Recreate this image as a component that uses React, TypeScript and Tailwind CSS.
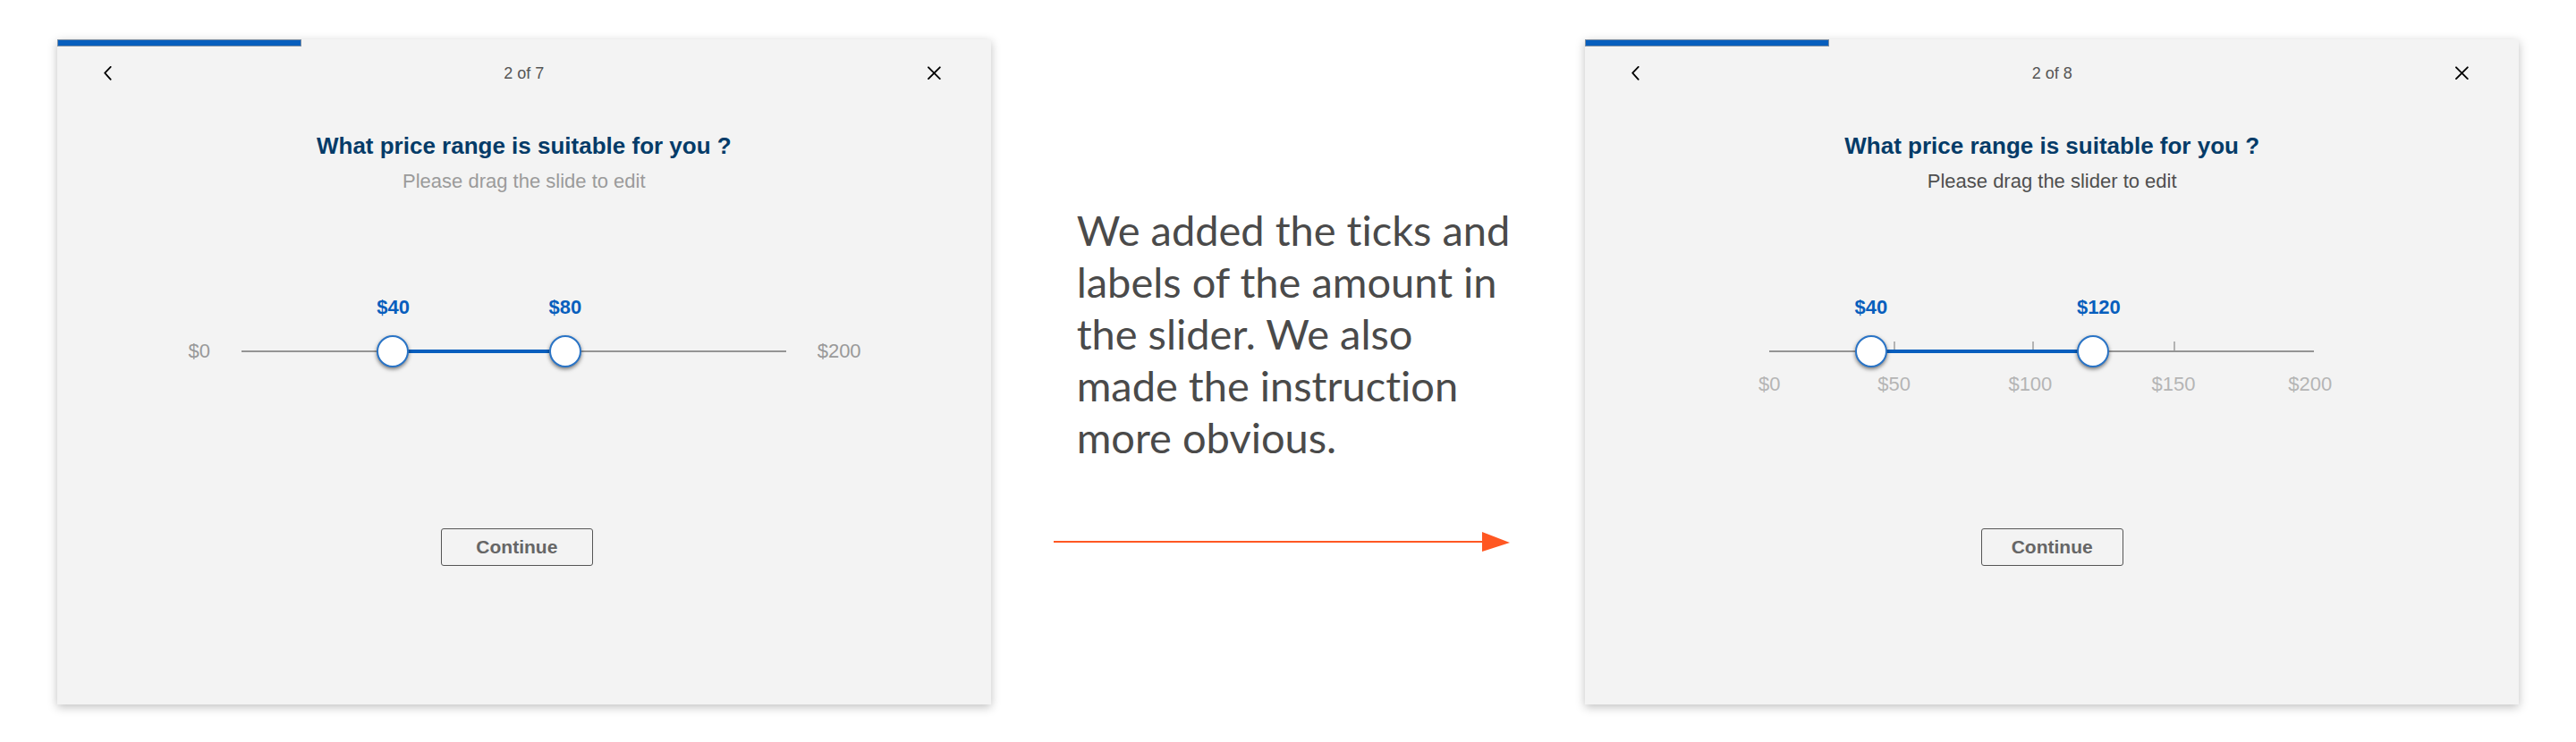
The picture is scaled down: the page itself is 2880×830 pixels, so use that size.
import { useState } from "react";

type Stop = { at: number; price: number };
type Tick = { at: number; labelAt: number; label: string };

type StepProps = {
  id: string;
  counter: string;
  hint: string;
  hintClass: string;
  stops: Stop[];
  initial: [number, number];
  ends?: [string, string];
  ticks?: Tick[];
  buttonClass: string;
};

const SCALE = 1000;

function priceAt(stops: Stop[], at: number) {
  for (let i = 1; i < stops.length; i++) {
    const a = stops[i - 1];
    const b = stops[i];
    if (at <= b.at) {
      return Math.round(a.price + ((at - a.at) / (b.at - a.at)) * (b.price - a.price));
    }
  }
  return stops[stops.length - 1].price;
}

const percent = (at: number) => `${(at / SCALE) * 100}%`;

const rangeClass =
  "pointer-events-none absolute inset-y-0 -left-[18px] h-9 w-[calc(100%+36px)] appearance-none bg-transparent outline-none " +
  "[&::-webkit-slider-thumb]:pointer-events-auto [&::-webkit-slider-thumb]:size-9 [&::-webkit-slider-thumb]:cursor-pointer " +
  "[&::-webkit-slider-thumb]:appearance-none [&::-webkit-slider-thumb]:rounded-full [&::-webkit-slider-thumb]:border-2 " +
  "[&::-webkit-slider-thumb]:border-[#2a74c6] [&::-webkit-slider-thumb]:bg-white " +
  "[&::-webkit-slider-thumb]:shadow-[0_2px_4px_rgba(0,0,0,0.5)]";

function PriceSlider({
  stops,
  initial,
  ticks = [],
}: {
  stops: Stop[];
  initial: [number, number];
  ticks?: Tick[];
}) {
  const [low, setLow] = useState(initial[0]);
  const [high, setHigh] = useState(initial[1]);

  const thumbs = [
    { name: "Lowest price", at: low, set: (v: number) => setLow(Math.min(v, high)) },
    { name: "Highest price", at: high, set: (v: number) => setHigh(Math.max(v, low)) },
  ];

  return (
    <div>
      {/* Each price starts at the left edge of its thumb. */}
      <div className="relative h-7">
        {thumbs.map((t) => (
          <output
            key={t.name}
            className="absolute top-0 -ml-[18px] text-[22px] leading-7 font-bold text-[#075ebd]"
            style={{ left: percent(t.at) }}
          >
            ${priceAt(stops, t.at)}
          </output>
        ))}
      </div>
      <div className="relative mt-[17px] flex h-9 items-center">
        <div className="h-[2px] w-full bg-[#949494]" />
        {ticks.slice(1, -1).map((t) => (
          <span
            key={t.label}
            className="absolute top-[7px] h-[10px] w-[2px] -translate-x-1/2 bg-[#b3b3b3]"
            style={{ left: percent(t.at) }}
          />
        ))}
        <div
          className="absolute top-4 h-1 bg-[#075ebd]"
          style={{ left: percent(low), width: percent(high - low) }}
        />
        {thumbs.map((t) => (
          <input
            key={t.name}
            type="range"
            aria-label={t.name}
            aria-valuetext={`$${priceAt(stops, t.at)}`}
            min={0}
            max={SCALE}
            value={t.at}
            onChange={(e) => t.set(Number(e.target.value))}
            className={rangeClass}
          />
        ))}
      </div>
      <div className="relative mt-[5px] h-7">
        {ticks.map((t) => (
          <span
            key={t.label}
            className="absolute top-0 -translate-x-1/2 text-[22px] leading-7 text-[#b5b5b5]"
            style={{ left: percent(t.labelAt) }}
          >
            {t.label}
          </span>
        ))}
      </div>
    </div>
  );
}

function Step(props: StepProps) {
  return (
    <section
      aria-labelledby={props.id}
      className="flex flex-col bg-[#f3f3f3] pb-[155px] font-['Liberation_Sans',Arial,sans-serif] shadow-[0_3px_10px_rgba(0,0,0,0.25)]"
    >
      <div className="h-2 w-[273px] border border-[#7d8fa3] bg-[#075ebd]" />
      <header className="grid h-[60px] grid-cols-[32px_1fr_32px] items-center px-12">
        <button type="button" aria-label="Back" className="flex size-8 items-center">
          <svg viewBox="0 0 16 16" className="size-4" fill="none" stroke="#000" strokeWidth="1.8" strokeLinecap="round" strokeLinejoin="round">
            <path d="M11.7 0.8 L5.2 7.6 L11.7 14.8" />
          </svg>
        </button>
        <p className="text-center text-lg leading-7 text-[#555]">{props.counter}</p>
        <button type="button" aria-label="Close" className="flex size-8 items-center justify-center">
          <svg viewBox="0 0 16 16" className="size-4" fill="none" stroke="#000" strokeWidth="1.9" strokeLinecap="round">
            <path d="M2 1.3 L14.8 14.1 M14.8 1.3 L2 14.1" />
          </svg>
        </button>
      </header>
      <h2 id={props.id} className="mt-[35px] text-center text-[26px] leading-8 font-bold text-[#043b68]">
        What price range is suitable for you ?
      </h2>
      <p className={`mt-2 text-center text-[22px] leading-8 ${props.hintClass}`}>{props.hint}</p>
      <div className="mt-[111px] grid grid-cols-[206px_1fr_229px]">
        <span className="pt-[49px] pr-[35px] text-right text-[22px] leading-7 text-[#999]">{props.ends?.[0]}</span>
        <PriceSlider stops={props.stops} initial={props.initial} ticks={props.ticks} />
        <span className="pt-[49px] pl-[35px] text-[22px] leading-7 text-[#999]">{props.ends?.[1]}</span>
      </div>
      <button
        type="button"
        className={`mt-[147px] h-[42px] self-center rounded-[3px] border border-[#555] text-[21px] leading-7 font-bold text-[#666] ${props.buttonClass}`}
      >
        Continue
      </button>
    </section>
  );
}

export default function App() {
  return (
    <main className="grid grid-cols-[1044fr_664fr_1044fr] items-start bg-white px-16 pt-11 pb-[42px]">
      <Step
        id="before-title"
        counter="2 of 7"
        hint="Please drag the slide to edit"
        hintClass="text-[#9b9b9b]"
        stops={[
          { at: 0, price: 0 },
          { at: 278, price: 40 },
          { at: 594, price: 80 },
          { at: 1000, price: 200 },
        ]}
        initial={[278, 594]}
        ends={["$0", "$200"]}
        buttonClass="mr-4 w-[170px]"
      />
      <div className="pt-[184px] pr-[84px] pl-[70px]">
        <p className="pl-[26px] font-[Lato,sans-serif] text-[47px] leading-[58px] whitespace-nowrap text-[#4a4a4a] [font-variant-ligatures:none]">
          We added the ticks and
          <br />
          labels of the amount in
          <br />
          the slider. We also
          <br />
          made the instruction
          <br />
          more obvious.
        </p>
        <div className="mt-[77px] flex items-center">
          <div className="h-[2px] flex-1 bg-[#ff5722]" />
          <svg viewBox="0 0 31 22" className="h-[22px] w-[31px]" fill="#ff5722">
            <path d="M0 0 L31 12 L0 22 Z" />
          </svg>
        </div>
      </div>
      <Step
        id="after-title"
        counter="2 of 8"
        hint="Please drag the slider to edit"
        hintClass="text-[#4f4f4f]"
        stops={[
          { at: 0, price: 0 },
          { at: 186, price: 40 },
          { at: 594, price: 120 },
          { at: 1000, price: 200 },
        ]}
        initial={[186, 594]}
        ticks={[
          { at: 0, labelAt: 0, label: "$0" },
          { at: 229, labelAt: 229, label: "$50" },
          { at: 484, labelAt: 479, label: "$100" },
          { at: 743, labelAt: 742, label: "$150" },
          { at: 1000, labelAt: 993, label: "$200" },
        ]}
        buttonClass="w-[159px]"
      />
    </main>
  );
}
